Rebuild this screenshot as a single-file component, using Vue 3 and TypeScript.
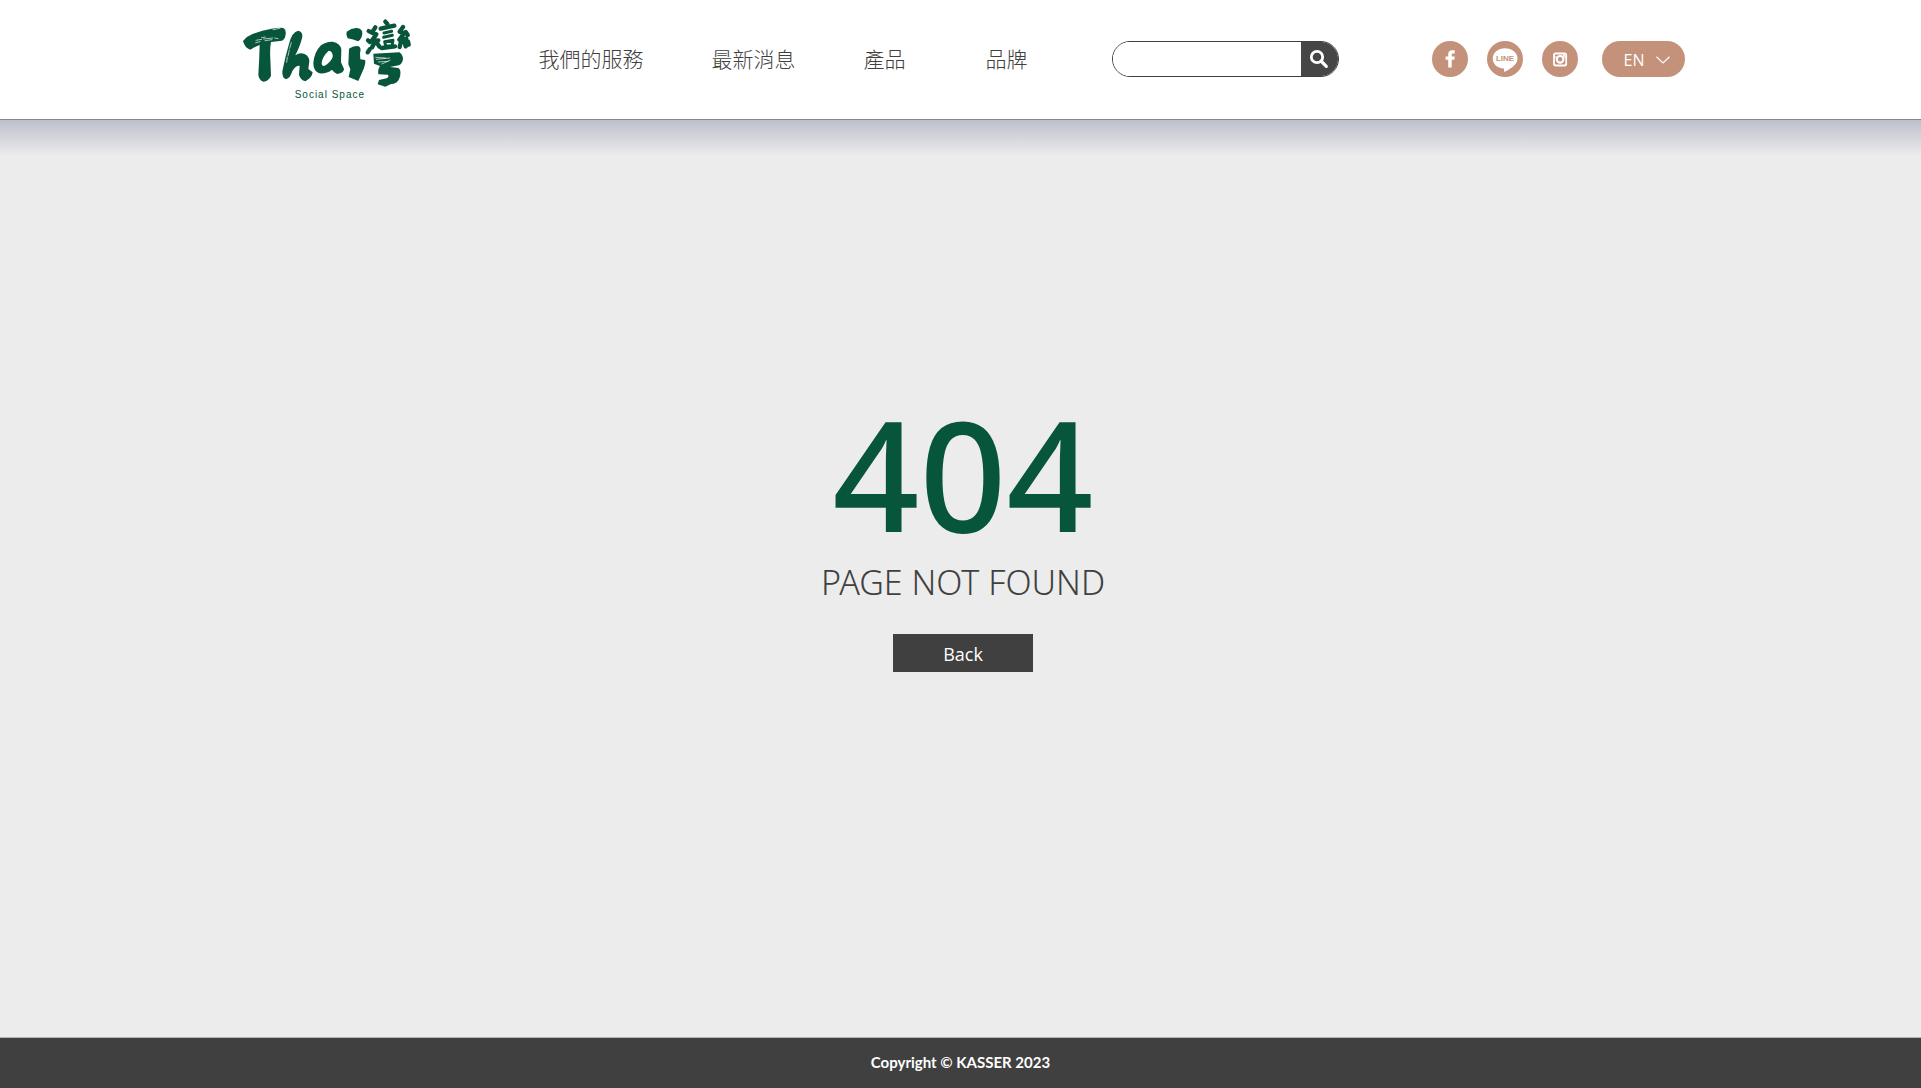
<script setup lang="ts">
import { ref } from 'vue'

interface NavItem {
  label: string
  href: string
}

const navItems: NavItem[] = [
  { label: '我們的服務', href: '#services' },
  { label: '最新消息', href: '#news' },
  { label: '產品', href: '#products' },
  { label: '品牌', href: '#brands' },
]

const keyword = ref('')

function goBack(): void {
  window.history.back()
}
</script>

<template>
  <div class="page">
    <header class="header">
      <a class="logo" href="#home" aria-label="Thai灣 Social Space">
        <svg width="168" height="85" viewBox="39 24 504 255" aria-hidden="true">
          <g fill="#07553b">
            <path d="M39 96 Q50 82 66 76 Q92 64 125 59 Q150 55 160 57 Q169 62 167 76 Q165 92 156 95 L123 99 Q119 120 121 150 L123 200 Q116 217 100 218 Q87 214 85 198 Q88 150 89 108 Q74 114 61 122 Q45 118 39 96Z" />
            <path d="M205 65 Q218 68 217 83 Q212 107 196 139 Q207 130 222 134 Q238 140 238 157 L235 180 L248 190 Q246 207 226 217 Q211 213 207 197 L209 170 Q197 169 187 186 Q181 207 168 211 Q156 207 157 187 Q165 145 177 105 Q186 68 205 65Z" />
            <path fill-rule="evenodd" d="M250 163 Q252 130 273 109 Q289 97 308 98 Q331 103 334 121 L333 160 L342 180 Q342 192 321 195 Q311 190 306 182 Q290 195 268 193 Q250 186 250 163Z M275 162 Q276 144 296 125 Q309 126 308 145 Q300 163 282 171 Q275 171 275 162Z" />
            <path d="M350 68 Q365 56 380 57 Q398 59 397 73 Q396 91 384 97 Q371 91 353 88 Q347 78 350 68Z" />
            <path d="M357 119 Q371 109 386 112 Q395 117 390 132 L391 151 L405 153 Q408 158 402 177 L385 216 L356 204 L361 181 L355 166Z" />
            <path d="M430 134 L508 130 Q519 137 519 151 Q517 165 506 169 L480 174 L506 177 Q517 187 507 211 Q501 225 483 225 L466 233 L443 226 L447 213 L470 208 Q478 203 474 197 L445 196 Q443 180 450 171 L432 164Z" />
          </g>
          <g fill="none" stroke="#07553b" stroke-width="13" stroke-linecap="round" stroke-linejoin="round">
            <path d="M416 66l5 3M414 94l6 5M413 130l6-9" />
            <path d="M436 55l-10 16 13 5-14 20 20-2M431 106l-5 9M442 103l6 10" />
            <path d="M466 38l6 7M452 59l41-9" />
            <path d="M519 54l-10 14 13 5-14 19 21-3M527 69l6 9M512 101l-3 13M523 98l4 14M534 97l2 10" />
            <path d="M455 117l40-5" />
          </g>
          <g fill="none" stroke="#07553b" stroke-width="9" stroke-linecap="round" stroke-linejoin="round">
            <path d="M462 72l23-5M461 85l26-6M464 98l25-4-3 16-19 1Z" />
          </g>
          <g fill="none" stroke="#fff" stroke-width="2" stroke-linecap="round">
            <path d="M78 94l17-3M77 101l13-3M101 90l27-3M105 95l21-3M129 62l21-4M134 87l10 2M95 86l11-2" />
            <path d="M184 101l-5 17M178 123l-4 18M172 145l-2 15" />
            <path d="M437 145l29 2M439 151l40-4M445 159l29-2M455 165l25-11" />
          </g>
          <text x="194" y="266" class="logo-caption">Social Space</text>
        </svg>
      </a>

      <nav class="nav" aria-label="主選單">
        <a v-for="item in navItems" :key="item.href" :href="item.href">{{ item.label }}</a>
      </nav>

      <form class="search" role="search" @submit.prevent>
        <input v-model="keyword" type="search" aria-label="搜尋" />
        <button type="submit" aria-label="搜尋">
          <svg width="20" height="20" viewBox="0 0 20 20" fill="none" stroke="#fff" aria-hidden="true">
            <circle cx="8" cy="8" r="5.7" stroke-width="2.8" />
            <path d="M12.5 12.5L17.3 17.3" stroke-width="3.2" stroke-linecap="round" />
          </svg>
        </button>
      </form>

      <div class="social">
        <a href="#facebook" aria-label="Facebook">
          <svg width="36" height="36" viewBox="0 0 36 36" aria-hidden="true">
            <path fill="#fff" d="M16.2 26.5V18.7h-2.6v-3.2h2.6v-2.3c0-2.7 1.5-3.9 4-3.9h2.5v3.1H21c-1 0-1.3.5-1.3 1.3v1.8h3l-.4 3.2h-2.6v7.8z" />
          </svg>
        </a>
        <a href="#line" aria-label="LINE">
          <svg width="36" height="36" viewBox="0 0 36 36" aria-hidden="true">
            <path fill="#fff" d="M18 7.2c7 0 12.5 4.6 12.5 10.2 0 4.2-3 7.2-6.5 9.6-2.4 1.7-5.7 4-6.7 3.7-.8-.3.6-2.8-.6-3.100C10.300 27 5.700 22.800 5.700 17.400 5.700 11.800 11 7.200 18 7.200z" />
            <text x="18" y="20" class="line-label">LINE</text>
          </svg>
        </a>
        <a href="#instagram" aria-label="Instagram">
          <svg width="36" height="36" viewBox="0 0 36 36" fill="none" stroke="#fff" aria-hidden="true">
            <rect x="12" y="12.5" width="12.2" height="12" rx="1.7" stroke-width="1.8" />
            <circle cx="18.100" cy="18.300" r="3.300" stroke-width="2.200" />
            <path d="M12 16h3M21 16h3" stroke-width="1.200" />
            <rect x="20.800" y="13.400" width="2" height="2" fill="#fff" stroke="none" />
          </svg>
        </a>
      </div>

      <button class="language" type="button">
        EN
        <svg width="14" height="8" viewBox="0 0 14 8" fill="none" stroke="#fff" stroke-width="1.2" aria-hidden="true">
          <path d="M.5.8L7 7 13.500.8" />
        </svg>
      </button>
    </header>

    <main class="main">
      <h1>404</h1>
      <p>PAGE NOT FOUND</p>
      <button type="button" @click="goBack">Back</button>
    </main>

    <footer class="footer">Copyright © KASSER 2023</footer>
  </div>
</template>

<style>
body {
  margin: 0;
}
</style>

<style scoped>
.page {
  display: flex;
  flex-direction: column;
  min-height: 100vh;
  background: #ececec;
  color: #404040;
  font-family: "Noto Sans", "Noto Sans CJK TC", sans-serif;
}

.header {
  display: flex;
  align-items: center;
  justify-content: center;
  box-sizing: border-box;
  height: 120px;
  padding-left: 6px;
  border-bottom: 1px solid #85858a;
  background: #fff;
}

.logo {
  display: flex;
  margin-right: 128px;
}

.logo-caption {
  fill: #07553b;
  font-family: "Liberation Sans", sans-serif;
  font-size: 30px;
  letter-spacing: 3px;
}

.nav {
  display: flex;
  gap: 68px;
  margin-right: 84px;
  padding-bottom: 4px;
}

.nav a {
  color: #404040;
  font-family: "Noto Sans CJK TC", sans-serif;
  font-size: 21px;
  font-weight: 300;
  line-height: 32px;
  text-decoration: none;
  white-space: nowrap;
}

.nav a:last-child {
  margin-left: 12px;
}

.search {
  display: flex;
  box-sizing: border-box;
  width: 227px;
  height: 36px;
  margin-right: 93px;
  overflow: hidden;
  border: 1px solid #404040;
  border-radius: 18px;
}

.search input {
  flex: 1;
  min-width: 0;
  padding: 0 16px;
  border: 0;
  outline: 0;
  background: #fff;
  font: inherit;
}

.search button {
  display: flex;
  align-items: center;
  justify-content: center;
  width: 37px;
  padding: 0;
  border: 0;
  background: #464646;
}

.social {
  display: flex;
  gap: 19px;
  margin-right: 24px;
}

.social a {
  display: flex;
  border-radius: 50%;
  background: #c4917a;
}

.line-label {
  fill: #c4917a;
  font-family: "Liberation Sans", sans-serif;
  font-size: 8px;
  font-weight: 700;
  text-anchor: middle;
}

.language {
  display: flex;
  align-items: center;
  justify-content: center;
  gap: 12px;
  width: 83px;
  height: 36px;
  padding: 2px 0 0 8px;
  border: 0;
  border-radius: 18px;
  background: #c4917a;
  color: #fff;
  font-family: "Open Sans", sans-serif;
  font-size: 16px;
}

.search,
.social,
.language {
  margin-bottom: 1px;
}

.main {
  display: flex;
  flex: 1;
  flex-direction: column;
  align-items: center;
  justify-content: center;
  padding-left: 5px;
  padding-bottom: 92px;
  background: linear-gradient(#bcc0cb, #ececec 36px);
}

.main h1 {
  margin: 0 0 4px;
  color: #07553b;
  font-size: 152px;
  font-weight: 500;
  line-height: 160px;
}

.main p {
  margin: 0 0 28px;
  font-family: "Noto Sans", sans-serif;
  font-size: 34px;
  font-weight: 300;
  line-height: 48px;
}

.main button {
  width: 140px;
  height: 38px;
  padding: 2px 0 0;
  border: 0;
  background: #404040;
  color: #fff;
  font-family: "Open Sans", sans-serif;
  font-size: 18px;
}

.footer {
  box-sizing: border-box;
  height: 51px;
  border-top: 1px solid #b4b4b4;
  background: #404040;
  color: #fff;
  font-family: Lato, sans-serif;
  font-size: 15px;
  font-weight: 700;
  line-height: 48px;
  text-align: center;
}
</style>
